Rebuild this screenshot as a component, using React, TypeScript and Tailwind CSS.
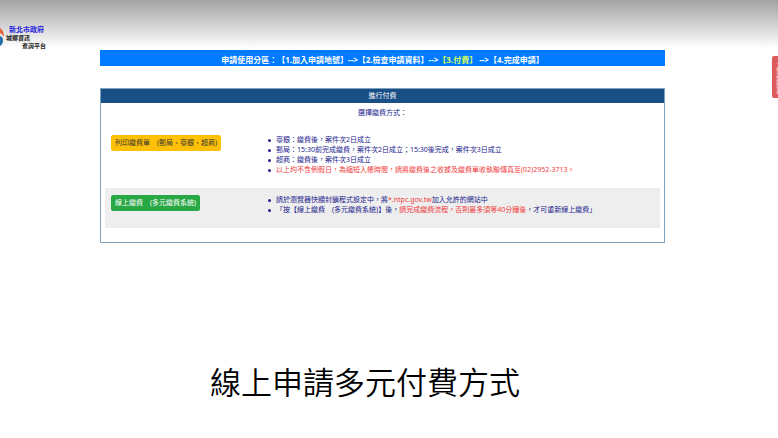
import type { ReactNode } from "react";

const steps = ["【1.加入申請地號】", "【2.檢查申請資料】", "【3.付費】", "【4.完成申請】"];
const currentStep = 2;

function Logo() {
  return (
    <div className="flex items-start pt-[26px]">
      <svg className="mt-px h-5 w-1" viewBox="0 0 4 20" aria-hidden="true">
        <path d="M0 1C2 2 4 5 4 10C3 8 2 7 0 6Z" fill="#e8603c" />
        <path d="M0 9C2 10 3 11 3 13C3 16 2 18 0 19Z" fill="#1d6fa5" />
      </svg>
      <div className="ml-0.5 w-10 text-[6px] leading-[8px] font-bold text-[#222]">
        <div className="ml-[3px] text-[7px] text-[#2222dd]">新北市政府</div>
        <div>城鄉資訊</div>
        <div className="text-right">查詢平台</div>
      </div>
    </div>
  );
}

function StepBar() {
  return (
    <nav className="flex h-4 items-center justify-center bg-[#007bff] pt-1 text-[8px] leading-[8px] font-bold whitespace-pre text-white">
      申請使用分區：
      {steps.map((step, idx) => (
        <span key={step}>
          {idx > 0 && (idx === 3 ? " -->" : "-->")}
          <span className={idx === currentStep ? "text-[#d9ff5a]" : ""}>{step}</span>
        </span>
      ))}
    </nav>
  );
}

function Note({ children }: { children: ReactNode }) {
  return (
    <li className="relative before:absolute before:top-1 before:-left-2 before:size-[3px] before:rounded-full before:bg-current">
      {children}
    </li>
  );
}

export default function App() {
  return (
    <div
      lang="zh-Hant"
      className="min-h-screen bg-linear-to-b from-[#a3a3a3] to-white to-[48px] font-['Noto_Sans','Noto_Sans_CJK_TC',sans-serif]"
    >
      <div className="grid grid-cols-[100px_1fr_113px]">
        <Logo />
        <main className="pt-[50px]">
          <StepBar />
          <section className="mt-[22px] border border-[#7fa3bd] pb-[14px] text-[7px] leading-[10px] text-[#22228c]">
            <h1 className="h-[14px] bg-[#174f86] text-center leading-[14px] text-white">進行付費</h1>
            <p className="pt-[5px] text-center">選擇繳費方式：</p>
            <div className="mx-1 mt-[17px] flex px-[6px] pb-[13px]">
              <div className="w-[144px]">
                <button className="h-4 rounded-xs bg-[#ffc107] px-1 text-[#333]">列印繳費單　(郵局、臺銀、超商)</button>
              </div>
              <ul className="pl-[21px]">
                <Note>臺銀：繳費後，案件次2日成立</Note>
                <Note>郵局：15:30前完成繳費，案件次2日成立；15:30後完成，案件次3日成立</Note>
                <Note>超商：繳費後，案件次3日成立</Note>
                <Note>
                  <span className="text-[#f03c3c]">
                    以上均不含例假日，為縮短入帳時間，請將繳費後之收據及繳費單收執聯傳真至(02)2952-3713。
                  </span>
                </Note>
              </ul>
            </div>
            <div className="mx-1 flex bg-[#eee] px-[6px] pt-[7px] pb-[13px]">
              <div className="w-[144px]">
                <button className="h-4 rounded-xs bg-[#28a745] px-1 text-white">線上繳費　(多元繳費系統)</button>
              </div>
              <ul className="pl-[21px]">
                <Note>
                  請於瀏覽器快顯封鎖程式設定中，將<span className="text-[#f03c3c]">*.ntpc.gov.tw</span>加入允許的網站中
                </Note>
                <Note>
                  「按【線上繳費　(多元繳費系統)】後，
                  <span className="text-[#f03c3c]">請完成繳費流程，否則最多須等40分鐘後</span>，才可重新線上繳費」
                </Note>
              </ul>
            </div>
          </section>
        </main>
        {/* side tab, mostly tucked behind the window edge */}
        <aside className="flex items-start justify-end overflow-hidden pt-14">
          <button className="-mr-2 flex h-[42px] w-[14px] items-center justify-center rounded-l-xs bg-[#dc5c5c] text-[7px] leading-[7px] text-[#fbe0e0] [writing-mode:vertical-rl]">
            ◂快速選單
          </button>
        </aside>
      </div>
      <h2 className="mt-[116px] pr-[48px] text-center text-[31px] leading-[46px] font-[350] text-black">
        線上申請多元付費方式
      </h2>
    </div>
  );
}
